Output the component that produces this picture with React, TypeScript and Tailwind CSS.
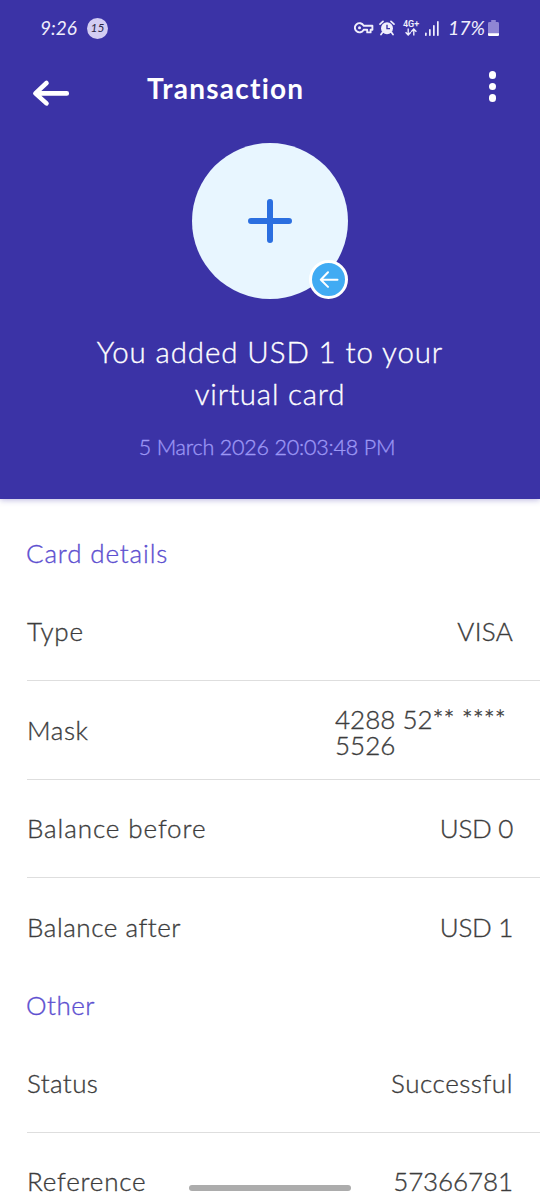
import type { ReactNode } from 'react';
import clsx from 'clsx';

interface RowProps {
  label: string;
  labelClass: string;
  value: ReactNode;
  valueClass: string;
  height?: string;
  last?: boolean;
}

function StatusBar() {
  return (
    <div className="flex h-[56px] items-center text-[#f0eefc]">
      <span className="ml-[40px] w-[38px] text-[19px] leading-[20px] font-normal italic whitespace-nowrap">9:26</span>
      <span className="ml-[9px] flex size-[21px] items-center justify-center rounded-full bg-[#d3cdf3] text-[12px] leading-none font-normal text-[#2b2746] italic">
        15
      </span>

      {/* vpn key */}
      <svg className="ml-[246px] shrink-0" width="20" height="14" viewBox="0 0 20 14" fill="none" stroke="currentColor" strokeWidth="1.9">
        <path d="M9.6 4.7H18.4V8.8H16.6V11.4H13.2V8.8H9.6A4.6 4.6 0 1 1 9.6 4.7Z" strokeLinejoin="round" />
        <circle cx="5.5" cy="6.8" r="1.5" fill="currentColor" stroke="none" />
      </svg>

      {/* alarm */}
      <svg className="ml-[5px] shrink-0" width="16" height="16" viewBox="0 0 16 16" fill="none">
        <circle cx="8" cy="8.3" r="6" fill="currentColor" />
        <path d="M1 4.1 4 1.4M15 4.1 12 1.4M3.4 12.6 2 14.6M12.6 12.6 14 14.6" stroke="currentColor" strokeWidth="1.7" strokeLinecap="round" />
        <path d="M8 4.8V8.6H11" stroke="#3b33a6" strokeWidth="1.4" />
      </svg>

      <div className="ml-[8px] flex w-[16px] flex-col items-center">
        <span className="font-['Roboto',sans-serif] text-[9px] leading-[8px] font-semibold">4G+</span>
        <svg width="12" height="8" viewBox="0 0 12 8" fill="none" stroke="currentColor" strokeWidth="1.4">
          <path d="M3.2 .4V6.8M.6 4.2 3.2 6.9 5.8 4.2M8.8 7.4V1.2M6.2 3.8 8.8 1.1 11.4 3.8" />
        </svg>
      </div>

      <svg className="ml-[6px] shrink-0" width="15" height="15" viewBox="0 0 15 15" fill="currentColor">
        <rect x="0" y="11.5" width="1.7" height="3.5" rx=".8" />
        <rect x="4" y="8" width="1.7" height="7" rx=".8" />
        <rect x="8" y="4" width="1.7" height="11" rx=".8" />
        <rect x="12" y="0" width="1.7" height="15" rx=".8" />
      </svg>

      <span className="ml-[8px] w-[38px] text-[19.5px] leading-[20px] font-normal italic whitespace-nowrap">17%</span>

      <svg className="ml-[2px] shrink-0" width="11" height="16" viewBox="0 0 11 16">
        <path d="M3.2 0H7.8V2H9.6Q11 2 11 3.4V14.4Q11 16 9.6 16H1.4Q0 16 0 14.4V3.4Q0 2 1.4 2H3.2Z" fill="#8f86d4" />
        <path d="M0 13.2H11V14.4Q11 16 9.6 16H1.4Q0 16 0 14.4Z" fill="#fff" />
      </svg>
    </div>
  );
}

function Row({ label, labelClass, value, valueClass, height = 'h-[99px]', last }: RowProps) {
  return (
    <div className={clsx('ml-[27px] flex items-center justify-between pr-[27px]', height, !last && 'border-b border-[#dedede]')}>
      <span className={clsx('whitespace-nowrap', labelClass)}>{label}</span>
      <span className={clsx('whitespace-nowrap', valueClass)}>{value}</span>
    </div>
  );
}

export default function App() {
  return (
    <div className="relative h-[1199px] w-[540px] overflow-hidden bg-white font-['Lato',sans-serif] font-light">
      <header className="h-[499px] bg-[#3b33a6] text-white shadow-[0_1px_6px_rgba(59,51,166,0.35)]">
        <StatusBar />

        <div className="flex h-[64px] items-start">
          <svg className="mt-[23px] ml-[32px]" width="38" height="28" viewBox="0 0 38 28" fill="none" stroke="currentColor" strokeWidth="4.6" strokeLinecap="round" strokeLinejoin="round">
            <path d="M34.8 14.4H4M14.5 4 3.4 14.4 14.5 24.4" />
          </svg>
          <h1 className="mt-[15px] ml-[77px] w-[158px] text-[28px] leading-[34px] font-bold tracking-[1.25px] whitespace-nowrap">Transaction</h1>
          <div className="mt-[15px] ml-[183.5px] flex flex-col gap-[4px]">
            <span className="size-[7.5px] rounded-full bg-white" />
            <span className="size-[7.5px] rounded-full bg-white" />
            <span className="size-[7.5px] rounded-full bg-white" />
          </div>
        </div>

        <div className="relative mx-auto mt-[22.5px] flex size-[156px] items-center justify-center rounded-full bg-[#e8f6ff]">
          <svg width="44" height="44" viewBox="0 0 44 44" stroke="#2b6fe0" strokeWidth="6" strokeLinecap="round">
            <path d="M22 3V41M3 22H41" />
          </svg>
          <div className="absolute right-0 bottom-0 flex size-[39px] items-center justify-center rounded-full border-[3px] border-white bg-[#41abf3]">
            <svg width="20" height="18" viewBox="0 0 20 18" fill="none" stroke="#fff" strokeWidth="2" strokeLinecap="round" strokeLinejoin="round">
              <path d="M18.5 9.8H1.8M9 2.3 1.8 9.8 9 16.9" />
            </svg>
          </div>
        </div>

        <div className="mt-[32.5px] flex flex-col items-center text-[29.5px] leading-[42px] [-webkit-text-stroke:0.35px_currentColor]">
          <p className="tracking-[0.9px] whitespace-nowrap">You added USD 1 to your</p>
          <p className="tracking-[0.8px] whitespace-nowrap">virtual card</p>
        </div>
        <p className="mt-[17px] pr-[6px] text-center text-[21.5px] leading-[30px] tracking-[-0.2px] text-[#9c97f5] [-webkit-text-stroke:0.35px_currentColor]">
          5 March 2026 20:03:48 PM
        </p>
      </header>

      <main className="text-[26px] leading-[26px] text-[#3c3c3c] [-webkit-text-stroke:0.35px_currentColor]">
        <h2 className="flex h-[83px] items-center pt-[25px] pl-[26px] tracking-[0.85px] text-[#5d4fd0]">Card details</h2>
        <Row label="Type" labelClass="tracking-[0.8px]" value="VISA" valueClass="tracking-[0.3px]" />
        <Row
          label="Mask"
          labelClass="tracking-[0.6px]"
          value={<>4288 52** ****<br />5526</>}
          valueClass="w-[178px] pt-[3px] text-left"
        />
        <Row label="Balance before" labelClass="pb-[2px] tracking-[0.9px]" value="USD 0" valueClass="pb-[2px] tracking-[-0.3px]" height="h-[98px]" />
        <Row label="Balance after" labelClass="pb-[2px] tracking-[0.55px]" value="USD 1" valueClass="pb-[2px] tracking-[-0.3px]" last />

        <h2 className="flex h-[57px] items-center pb-[2px] pl-[26px] tracking-[0.5px] text-[#5d4fd0]">Other</h2>
        <Row label="Status" labelClass="pb-px tracking-[0.4px]" value="Successful" valueClass="pb-px tracking-[0.55px]" />
        <Row label="Reference" labelClass="pb-[3px] tracking-[0.8px]" value="57366781" valueClass="pb-[3px] tracking-[-0.1px]" last />
      </main>

      {/* system gesture handle */}
      <div className="absolute bottom-[8px] left-[189px] h-[6px] w-[162px] rounded-full bg-[#acacac]" />
    </div>
  );
}
